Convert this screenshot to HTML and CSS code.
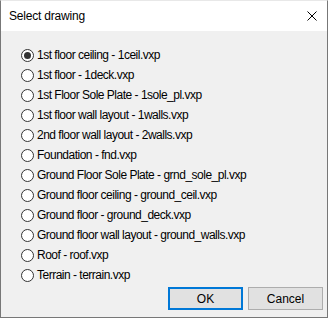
FILE: index.html
```html
<!DOCTYPE html>
<html>
<head>
<meta charset="utf-8">
<link rel="stylesheet" href="styles.css">
</head>
<body>
<div class="window">
  <div class="titlebar">
    <span class="title">Select drawing</span>
    <svg class="close" width="10" height="10" viewBox="0 0 10 10"><path d="M0.5 0.5 L9.5 9.5 M9.5 0.5 L0.5 9.5" stroke="#000" stroke-width="1" fill="none"/></svg>
  </div>
  <div class="content">
    <ul class="list">
      <li class="row"><span class="radio checked"></span><span class="label">1st floor ceiling - 1ceil.vxp</span></li>
      <li class="row"><span class="radio"></span><span class="label">1st floor - 1deck.vxp</span></li>
      <li class="row"><span class="radio"></span><span class="label">1st Floor Sole Plate - 1sole_pl.vxp</span></li>
      <li class="row"><span class="radio"></span><span class="label">1st floor wall layout - 1walls.vxp</span></li>
      <li class="row"><span class="radio"></span><span class="label">2nd floor wall layout - 2walls.vxp</span></li>
      <li class="row"><span class="radio"></span><span class="label">Foundation - fnd.vxp</span></li>
      <li class="row"><span class="radio"></span><span class="label">Ground Floor Sole Plate - grnd_sole_pl.vxp</span></li>
      <li class="row"><span class="radio"></span><span class="label">Ground floor ceiling - ground_ceil.vxp</span></li>
      <li class="row"><span class="radio"></span><span class="label">Ground floor - ground_deck.vxp</span></li>
      <li class="row"><span class="radio"></span><span class="label">Ground floor wall layout - ground_walls.vxp</span></li>
      <li class="row"><span class="radio"></span><span class="label">Roof - roof.vxp</span></li>
      <li class="row"><span class="radio"></span><span class="label">Terrain - terrain.vxp</span></li>
    </ul>
    <div class="buttons">
      <button class="btn default">OK</button>
      <button class="btn">Cancel</button>
    </div>
  </div>
</div>
</body>
</html>
```
FILE: styles.css
```css
html, body {
  margin: 0;
  padding: 0;
  background: #f0f0f0;
}
.window {
  width: 328px;
  height: 318px;
  box-sizing: border-box;
  border: 1px solid #777777;
  border-top-color: #e8e8e8;
  display: flex;
  flex-direction: column;
  font-family: "Liberation Sans", Arial, sans-serif;
  font-size: 12px;
  color: #000;
}
.titlebar {
  height: 30px;
  background: #ffffff;
  display: flex;
  align-items: center;
  justify-content: space-between;
  padding: 0 10px 0 8px;
  flex: none;
}
.title {
  font-size: 12px;
  letter-spacing: -0.2px;
}
.close {
  display: block;
}
.content {
  flex: 1;
  background: #f0f0f0;
  display: flex;
  flex-direction: column;
  padding: 14px 4px 6px 20px;
}
.list {
  list-style: none;
  margin: 0;
  padding: 0;
}
.row {
  height: 20px;
  display: flex;
  align-items: center;
}
.radio {
  width: 13px;
  height: 13px;
  box-sizing: border-box;
  border: 1px solid #333333;
  border-radius: 50%;
  background: #ffffff;
  flex: none;
  display: flex;
  align-items: center;
  justify-content: center;
  margin-right: 3px;
}
.radio.checked::after {
  content: "";
  width: 7px;
  height: 7px;
  border-radius: 50%;
  background: #333333;
}
.label {
  letter-spacing: -0.5px;
  white-space: nowrap;
}
.buttons {
  margin-top: 2px;
  display: flex;
  justify-content: flex-end;
  gap: 5px;
}
.btn {
  width: 75px;
  height: 23px;
  box-sizing: border-box;
  background: #e1e1e1;
  border: 1px solid #adadad;
  font-family: "Liberation Sans", Arial, sans-serif;
  font-size: 12px;
  color: #000;
  padding: 0;
  margin: 0;
}
.btn.default {
  border: 2px solid #0078d7;
}
```
